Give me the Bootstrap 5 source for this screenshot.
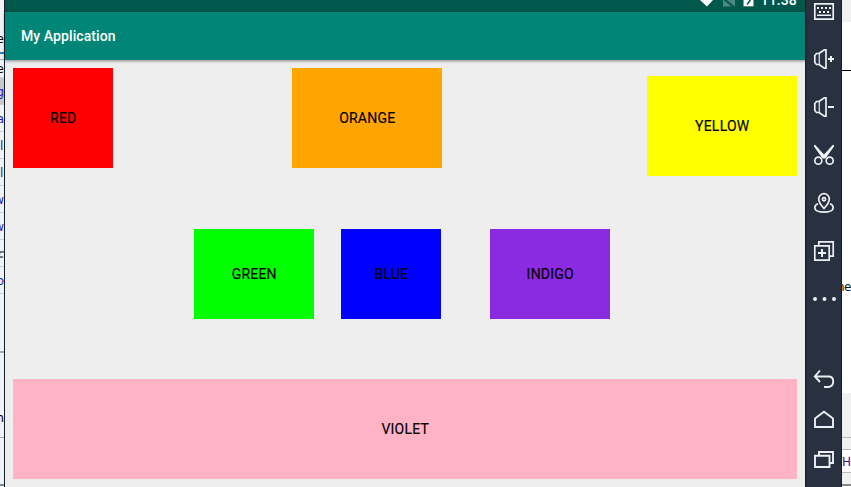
<!DOCTYPE html>
<html lang="en">
<head>
<meta charset="utf-8">
<title>My Application</title>
<link href="https://cdn.jsdelivr.net/npm/bootstrap@5.3.0/dist/css/bootstrap.min.css" rel="stylesheet">
<style>
body{width:851px;height:487px;font-family:Roboto,sans-serif;background:#fff}
.under-left{width:5px;flex:none;border-right:1px solid #141c28;background:#f0f3f5;font:12px/15px "DejaVu Sans",sans-serif;color:#2020c8}
.cell{flex:none;overflow:hidden;display:flex;align-items:center;justify-content:flex-end;border-bottom:1px solid #cdd2d6;height:27px;white-space:nowrap;padding-top:2px}
.cell.from-start{justify-content:flex-start}
.phone{width:800px;flex:none;background:#eee}
.statusbar{height:12px;background:#00574b;flex:none}
.clock{font-size:14px;line-height:16px;font-weight:500;color:#fff;margin-top:-8px;letter-spacing:.2px}
.appbar{height:48px;flex:none;background:#008577;color:#fff;font-size:14px;font-weight:500;letter-spacing:.09px;padding:1px 0 0 16px;box-shadow:0 1px 3px rgba(0,0,0,.45);position:relative}
.stage{padding:8px;flex:1}
.block{display:flex;align-items:center;justify-content:center;font-size:14px;font-weight:400;letter-spacing:.22px;color:#000;height:100px;width:150px;padding:1px 0 0 .5px;-webkit-text-stroke:.15px #000}
.red{background:#f00;width:100px}
.orange{background:#ffa500;margin-left:179px}
.yellow{background:#ff0;margin:8px 0 0 auto}
.middle{padding-left:181px;margin-top:53px}
.middle .block{height:90px;width:120px}
.green{background:#0f0}
.middle .blue{background:#00f;width:100px;margin-left:27px}
.indigo{background:#8a2be2;margin-left:49px}
.violet{background:#ffb3c4;width:100%;margin-top:60px}
.tools{width:37px;flex:none;background:#29303f;border:solid #151c29;border-width:0 1px}
.slot{height:48px;flex:none;display:flex;align-items:center;justify-content:center}
.slot.first{margin-top:-13px}
.slot.nav-key{height:40px}
.slot.back{margin-top:36px}
.slot svg{width:24px;height:24px;margin-left:1px;fill:none;stroke:#eceff3;stroke-width:1.7;flex:none}
.slot .solid{fill:#eceff3;stroke:none}
.slot .faint{stroke:#c3c8d0;stroke-width:1.5}
.under-right{flex:1;font:12px/15px "DejaVu Sans",sans-serif;color:#111;white-space:nowrap}
.under-right>div{flex:none;overflow:hidden}
</style>
<script src="https://cdn.jsdelivr.net/npm/bootstrap@5.3.0/dist/js/bootstrap.bundle.min.js"></script>
</head>
<body class="d-flex overflow-hidden m-0">
<aside class="under-left d-flex flex-column overflow-hidden">
  <div class="cell" style="height:24px;border:0"></div>
  <div class="cell text-black" style="height:28px;border:0">e</div>
  <div style="height:2px;background:#377bc5;flex:none"></div>
  <div class="cell" style="height:6px;border-color:#aaa"></div>
  <div class="cell text-black" style="height:18px">e</div>
  <div class="cell" style="height:27px;background:#c8c8cb"><u>g</u></div>
  <div class="cell">a</div>
  <div class="cell from-start">l</div>
  <div class="cell from-start">l</div>
  <div class="cell">w</div>
  <div class="cell">w</div>
  <div class="cell" style="color:#666"><b><i>c</i></b></div>
  <div class="cell">o</div>
  <div class="cell" style="height:57px;border:0"></div>
  <div style="height:2px;background:#aaa;flex:none"></div>
  <div class="cell" style="height:45px;border:0"></div>
  <div class="cell text-black" style="height:40px;align-items:flex-start;padding-top:13px;border-color:#aaa">m</div>
  <div class="cell" style="height:46px;border:0"></div>
  <div style="height:2px;background:#888;flex:none"></div>
</aside>

<main class="phone d-flex flex-column">
  <div class="statusbar d-flex justify-content-end align-items-start overflow-hidden">
    <svg width="60" height="12" viewBox="0 0 60 12"><path d="M0 0h13L7 6.500z" fill="#fff"/><path d="M23 0h12v6.500H23z" fill="#4d8980"/><path d="M24 -1l11 9" stroke="#00574b" stroke-width="2"/><path d="M43.500 0h10v6.300h-10z" fill="#fff"/><path d="M50.500 0l-3.500 4.500" stroke="#00574b" stroke-width="1.500"/></svg>
    <span class="clock me-2">11:38</span>
  </div>
  <header class="appbar d-flex align-items-center">My Application</header>
  <section class="stage">
    <div class="d-flex align-items-start">
      <div class="block red">RED</div>
      <div class="block orange">ORANGE</div>
      <div class="block yellow">YELLOW</div>
    </div>
    <div class="middle d-flex">
      <div class="block green">GREEN</div>
      <div class="block blue">BLUE</div>
      <div class="block indigo">INDIGO</div>
    </div>
    <div class="block violet">VIOLET</div>
  </section>
</main>

<nav class="tools d-flex flex-column overflow-hidden">
  <div class="slot first"><svg viewBox="0 0 24 24"><path d="M2.800 4.800h18.400v15.400H2.800z"/><path class="solid" d="M5 8h2v2H5zM9 8h2v2H9zM13 8h2v2h-2zM17 8h2v2h-2zM7 12h2v2H7zM11 12h2v2h-2zM15 12h2v2h-2zM5 15.500h14v1.500H5z"/></svg></div>
  <div class="slot"><svg viewBox="0 0 24 24"><path class="faint" d="M7.300 6.500V17.500"/><path d="M7.500 6.500H4.500L2.800 8.500v7l1.700 2h3M7 6.500l5.300-3.700H14v18.400h-1.700L7 17.500"/><path d="M16 12h6M19 9v6" stroke-width="2"/></svg></div>
  <div class="slot"><svg viewBox="0 0 24 24"><path class="faint" d="M7.300 6.500V17.500"/><path d="M7.500 6.500H4.500L2.800 8.500v7l1.700 2h3M7 6.500l5.300-3.700H14v18.400h-1.700L7 17.500"/><path d="M16 12h6" stroke-width="2"/></svg></div>
  <div class="slot"><svg viewBox="0 0 24 24"><circle cx="6.300" cy="17.700" r="3.500"/><circle cx="17.700" cy="17.700" r="3.500"/><path class="solid" d="M2 2h1.300L12 11.500 20.700 2H22v1.500L13.500 15.500h-3L2 3.500z"/></svg></div>
  <div class="slot"><svg viewBox="0 0 24 24"><path d="M12 17.500Q6.700 11.800 6.700 8a5.300 5.300 0 0 1 10.600 0Q17.300 11.800 12 17.500z"/><circle cx="12" cy="8.300" r="1.600"/><path d="M6 12.700Q2.800 14 2.800 16.500C2.800 19.500 7 21.200 12 21.200s9.200-1.700 9.200-4.700Q21.200 14 18 12.700"/></svg></div>
  <div class="slot"><svg viewBox="0 0 24 24"><path d="M2.800 6.800h14.400v14.400H2.800zM6.800 6.500V2.800h14.400v14.400H17.500"/><path d="M6 14h8M10 10v8" stroke-width="2"/></svg></div>
  <div class="slot"><svg viewBox="0 0 24 24"><circle class="solid" cx="3" cy="12" r="2"/><circle class="solid" cx="12.500" cy="12" r="2"/><circle class="solid" cx="22" cy="12" r="2"/></svg></div>
  <div class="slot nav-key back"><svg viewBox="0 0 24 24"><path d="M8 3.500L2.800 9.500 8 15M3 9.500h13.500q4.700 0 4.700 5t-4.700 5.500H12" stroke-width="1.900"/></svg></div>
  <div class="slot nav-key"><svg viewBox="0 0 24 24"><path d="M3 11.500L12 4.800l9 6.700V20H3z" stroke-width="1.900"/></svg></div>
  <div class="slot nav-key"><svg viewBox="0 0 24 24"><path d="M3 8.800h14.500V20H3zM7 8.300V5h14v11H18" stroke-width="1.900"/></svg></div>
</nav>

<aside class="under-right d-flex flex-column overflow-hidden">
  <div style="height:22px;background:#f0f0f0"></div>
  <div style="height:48px"></div>
  <div style="height:1px;background:#000"></div>
  <div style="height:209px"></div>
  <div class="d-flex justify-content-end" style="height:16px;letter-spacing:-.5px">ne</div>
  <div style="height:97px"></div>
  <div style="height:44px;background:#f0f0f0"></div>
  <div style="height:1px;background:#bbb"></div>
  <div style="height:11px;background:#f0f0f0"></div>
  <div style="height:1px;background:#bbb"></div>
  <div style="height:22px;padding-top:5px;color:#40108c">H</div>
  <div style="height:1px;background:#bbb"></div>
  <div style="height:11px;background:#f0f0f0"></div>
  <div style="height:2px;background:#888"></div>
</aside>
</body>
</html>
